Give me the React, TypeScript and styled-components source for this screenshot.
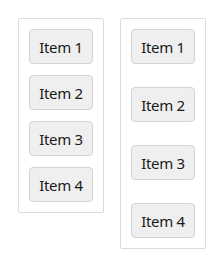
import React from 'react'
import styled, { createGlobalStyle } from 'styled-components'

const GlobalStyle = createGlobalStyle`
  html, body {
    margin: 0;
    padding: 0;
    background: #ffffff;
  }
  body {
    font-family: "Noto Sans", "Open Sans", sans-serif;
  }
`

const Page = styled.div`
  display: flex;
  align-items: flex-start;
  gap: 16px;
  padding: 18px 0 0 18px;
`

const Panel = styled.div<{ $spread?: boolean }>`
  display: flex;
  flex-direction: column;
  gap: ${({ $spread }) => ($spread ? '23px' : '11px')};
  width: 64px;
  padding: 10px;
  border: 1px solid #dcdcdc;
  border-radius: 2px;
`

const ItemButton = styled.button`
  height: 35px;
  width: 64px;
  padding: 0;
  box-sizing: border-box;
  background: #efefef;
  border: 1px solid #d4d4d4;
  border-radius: 4px;
  color: #1a1a1a;
  font-family: "Noto Sans", "Open Sans", sans-serif;
  font-size: 15px;
  letter-spacing: -0.3px;
  cursor: pointer;
`

const items = ['Item 1', 'Item 2', 'Item 3', 'Item 4']

const App: React.FC = () => {
  return (
    <>
      <GlobalStyle />
      <Page>
        <Panel>
          {items.map((label) => (
            <ItemButton key={label}>{label}</ItemButton>
          ))}
        </Panel>
        <Panel $spread>
          {items.map((label) => (
            <ItemButton key={label}>{label}</ItemButton>
          ))}
        </Panel>
      </Page>
    </>
  )
}

export default App
